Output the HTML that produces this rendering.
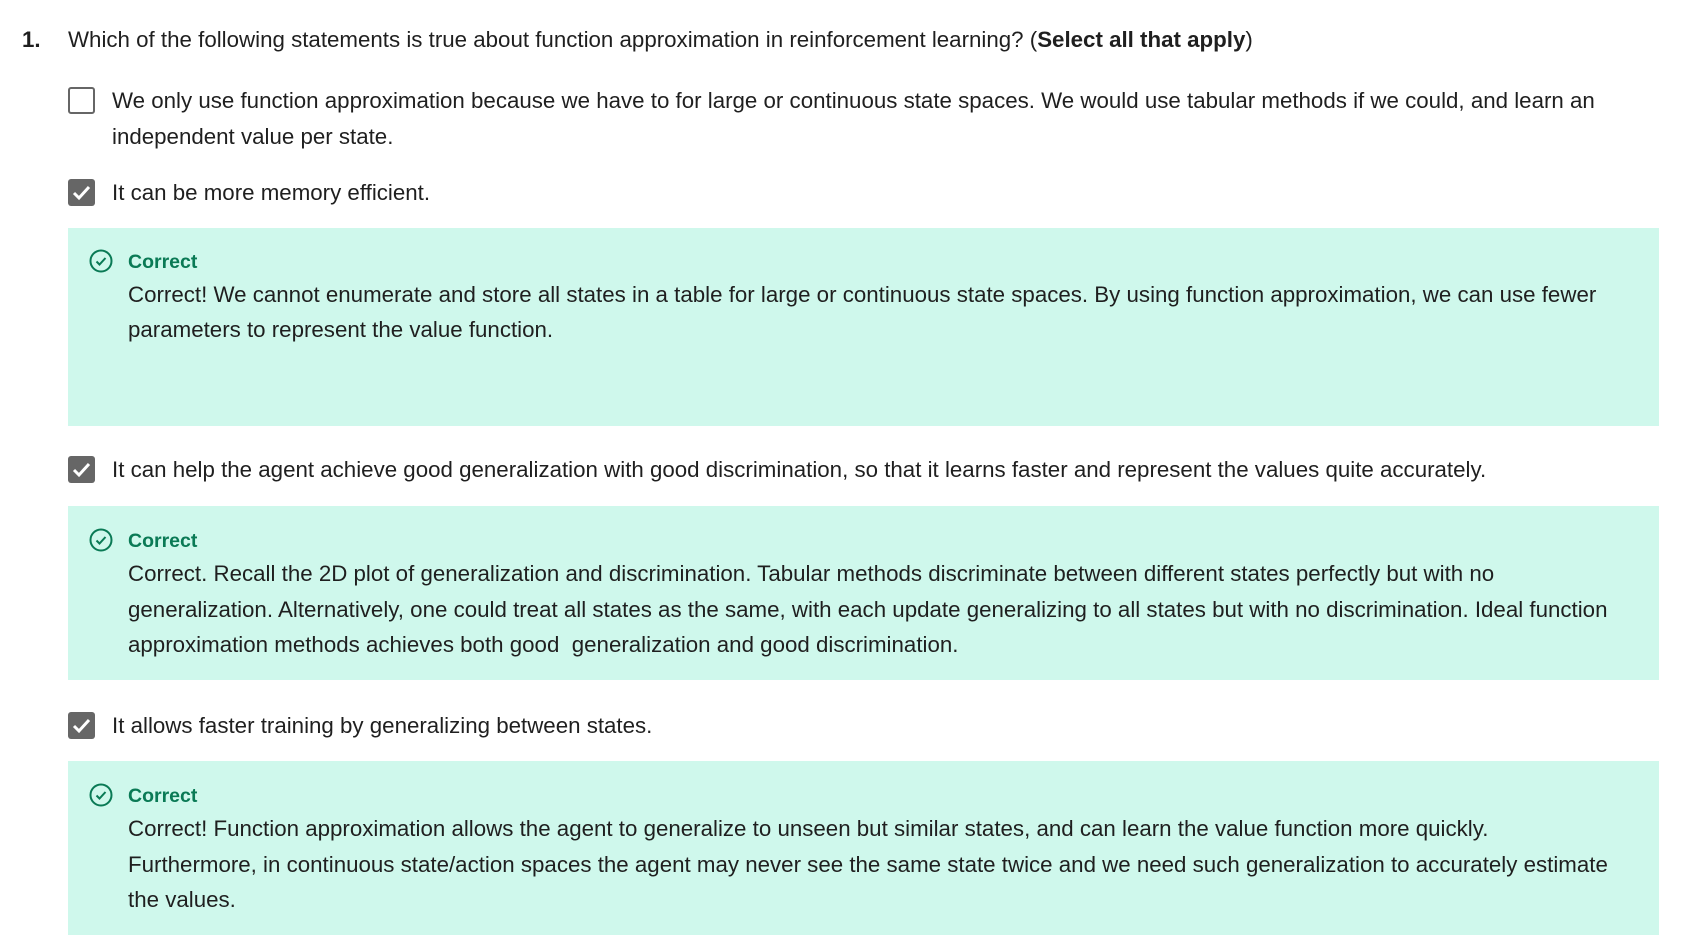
<!DOCTYPE html>
<html><head><meta charset="utf-8"><style>
body{margin:0;width:1683px;height:952px;background:#fff;position:relative;overflow:hidden;font-family:"Liberation Sans",sans-serif;color:#1f1f1f;}
.t{position:absolute;white-space:nowrap;font-size:22.3px;line-height:36px;}
.cb{position:absolute;left:68px;width:27px;height:27px;box-sizing:border-box;border-radius:3px;}
.cb.off{border:2.5px solid #666;}
.cb.on{background:#666;}
.box{position:absolute;left:68px;width:1591px;background:#cff8ec;}
.ok{position:absolute;color:#0a7a55;font-weight:bold;font-size:19.5px;line-height:24px;}
</style></head><body>
<div class="t" style="left:22px;top:22px;font-weight:bold">1.</div>
<div class="t" style="left:68px;top:22px">Which of the following statements is true about function approximation in reinforcement learning? (<b>Select all that apply</b>)</div>

<div class="cb off" style="top:87px"></div>
<div class="t" style="left:112px;top:83px">We only use function approximation because we have to for large or continuous state spaces. We would use tabular methods if we could, and learn an</div>
<div class="t" style="left:112px;top:119px">independent value per state.</div>

<div class="cb on" style="top:179px"><svg width="27" height="27"><path d="M6 14 L11 19 L21 8" stroke="#fff" stroke-width="3" fill="none"/></svg></div>
<div class="t" style="left:112px;top:175px">It can be more memory efficient.</div>

<div class="box" style="top:228px;height:198px"></div>
<svg style="position:absolute;left:89px;top:249px" width="24" height="24"><circle cx="12" cy="12" r="10.5" stroke="#0a7a55" stroke-width="2" fill="none"/><path d="M7.5 12.5 L10.5 15.5 L16.5 9" stroke="#0a7a55" stroke-width="2" fill="none"/></svg>
<div class="ok" style="left:128px;top:250px">Correct</div>
<div class="t" style="left:128px;top:277px">Correct! We cannot enumerate and store all states in a table for large or continuous state spaces. By using function approximation, we can use fewer</div>
<div class="t" style="left:128px;top:312px">parameters to represent the value function.</div>

<div class="cb on" style="top:456px"><svg width="27" height="27"><path d="M6 14 L11 19 L21 8" stroke="#fff" stroke-width="3" fill="none"/></svg></div>
<div class="t" style="left:112px;top:452px">It can help the agent achieve good generalization with good discrimination, so that it learns faster and represent the values quite accurately.</div>

<div class="box" style="top:506px;height:174px"></div>
<svg style="position:absolute;left:89px;top:528px" width="24" height="24"><circle cx="12" cy="12" r="10.5" stroke="#0a7a55" stroke-width="2" fill="none"/><path d="M7.5 12.5 L10.5 15.5 L16.5 9" stroke="#0a7a55" stroke-width="2" fill="none"/></svg>
<div class="ok" style="left:128px;top:529px">Correct</div>
<div class="t" style="left:128px;top:556px">Correct. Recall the 2D plot of generalization and discrimination. Tabular methods discriminate between different states perfectly but with no</div>
<div class="t" style="left:128px;top:592px">generalization. Alternatively, one could treat all states as the same, with each update generalizing to all states but with no discrimination. Ideal function</div>
<div class="t" style="left:128px;top:627px">approximation methods achieves both good&nbsp; generalization and good discrimination.</div>

<div class="cb on" style="top:712px"><svg width="27" height="27"><path d="M6 14 L11 19 L21 8" stroke="#fff" stroke-width="3" fill="none"/></svg></div>
<div class="t" style="left:112px;top:708px">It allows faster training by generalizing between states.</div>

<div class="box" style="top:761px;height:174px"></div>
<svg style="position:absolute;left:89px;top:783px" width="24" height="24"><circle cx="12" cy="12" r="10.5" stroke="#0a7a55" stroke-width="2" fill="none"/><path d="M7.5 12.5 L10.5 15.5 L16.5 9" stroke="#0a7a55" stroke-width="2" fill="none"/></svg>
<div class="ok" style="left:128px;top:784px">Correct</div>
<div class="t" style="left:128px;top:811px">Correct! Function approximation allows the agent to generalize to unseen but similar states, and can learn the value function more quickly.</div>
<div class="t" style="left:128px;top:847px">Furthermore, in continuous state/action spaces the agent may never see the same state twice and we need such generalization to accurately estimate</div>
<div class="t" style="left:128px;top:882px">the values.</div>
</body></html>
